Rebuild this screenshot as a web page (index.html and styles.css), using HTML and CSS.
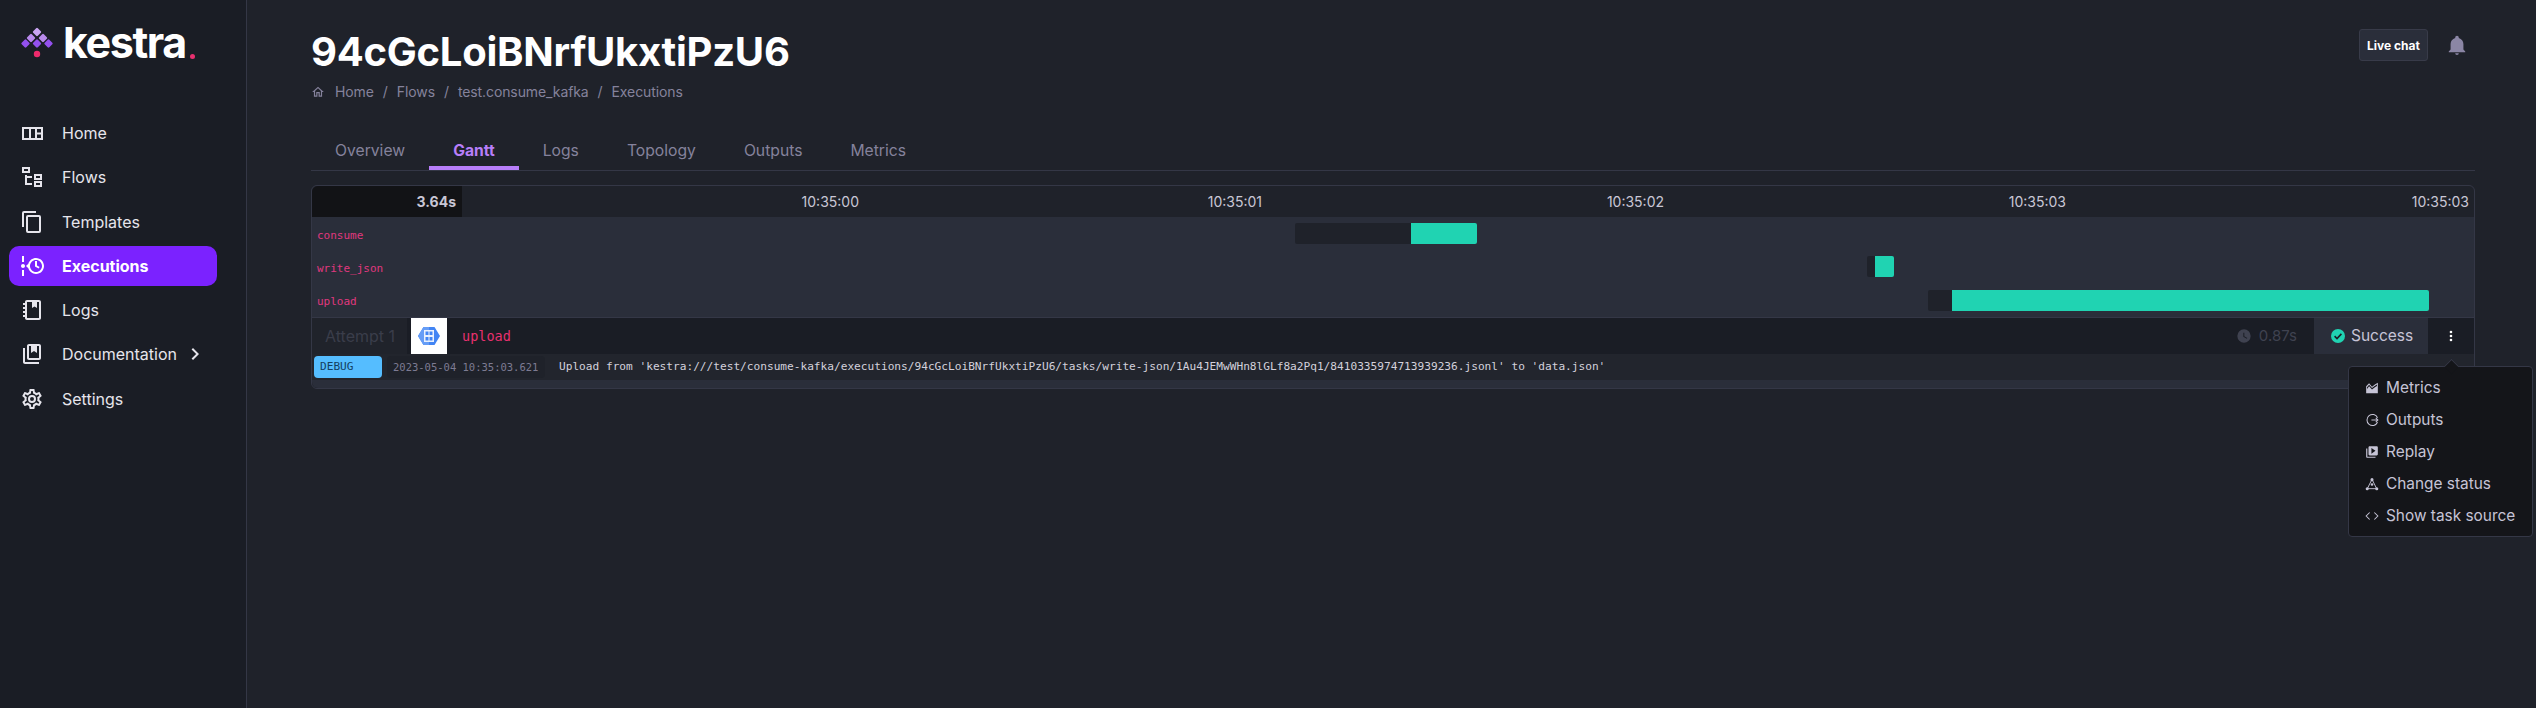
FILE: index.html
```html
<!DOCTYPE html>
<html lang="en">
<head>
    <meta charset="UTF-8">
    <meta name="viewport" content="width=device-width, initial-scale=1.0">
    <title>Kestra - Execution</title>
    <link rel="stylesheet" href="styles.css">
</head>
<body>
    <aside class="sidebar">
        <div class="logo">
            <svg class="logo-mark" width="36" height="40" viewBox="-4 0 36 40">
                <rect x="9.7" y="1.7" width="6.6" height="6.6" rx="1.2" transform="rotate(45 13 5)" fill="#c9a4f2"/>
                <rect x="3.7" y="7.7" width="6.6" height="6.6" rx="1.2" transform="rotate(45 7 11)" fill="#b889ec"/>
                <rect x="15.7" y="7.7" width="6.6" height="6.6" rx="1.2" transform="rotate(45 19 11)" fill="#b889ec"/>
                <rect x="-1.8" y="13.2" width="6.6" height="6.6" rx="1.2" transform="rotate(45 1.5 16.5)" fill="#9350ee"/>
                <rect x="9.7" y="13.2" width="6.6" height="6.6" rx="1.2" transform="rotate(45 13 16.5)" fill="#9350ee"/>
                <rect x="21.2" y="13.2" width="6.6" height="6.6" rx="1.2" transform="rotate(45 24.5 16.5)" fill="#9350ee"/>
                <circle cx="13" cy="27" r="3.2" fill="#ee2a6c"/>
            </svg>
            <span class="logo-text">kestra</span>
            <span class="logo-dot"></span>
        </div>
        <nav class="nav">
            <a class="nav-item">
                <svg class="nav-icon" viewBox="0 0 24 24"><path d="M3 7H22V18H3Z M10 7V18 M16 7V18 M16 12.5H22" fill="none" stroke="currentColor" stroke-width="2"/></svg>
                Home
            </a>
            <a class="nav-item">
                <svg class="nav-icon" viewBox="0 0 24 24"><path d="M12 13H7V18H12V20H5V10H7V11H12V13M8 4V6H4V4H8M10 2H2V8H10V2M20 11V13H16V11H20M22 9H14V15H22V9M20 18V20H16V18H20M22 16H14V22H22V16Z"/></svg>
                Flows
            </a>
            <a class="nav-item">
                <svg class="nav-icon" viewBox="0 0 24 24"><path d="M19,21H8V7H19M19,5H8A2,2 0 0,0 6,7V21A2,2 0 0,0 8,23H19A2,2 0 0,0 21,21V7A2,2 0 0,0 19,5M16,1H4A2,2 0 0,0 2,3V17H4V3H16V1Z"/></svg>
                Templates
            </a>
            <a class="nav-item active">
                <svg class="nav-icon" viewBox="0 0 24 24"><path d="M4 2V8H2V2H4M2 22V16H4V22H2M5 12C5 13.11 4.11 14 3 14C1.9 14 1 13.11 1 12C1 10.9 1.9 10 3 10C4.11 10 5 10.9 5 12M16 4C20.42 4 24 7.58 24 12C24 16.42 20.42 20 16 20C12.4 20 9.36 17.62 8.35 14.35L6 12L8.35 9.65C9.36 6.38 12.4 4 16 4M16 6C12.69 6 10 8.69 10 12C10 15.31 12.69 18 16 18C19.31 18 22 15.31 22 12C22 8.69 19.31 6 16 6M15 7V12.5L18.61 14.61L19.61 13L17 11.5V7H15Z"/></svg>
                Executions
            </a>
            <a class="nav-item">
                <svg class="nav-icon" viewBox="0 0 24 24"><path d="M7 2H19C20.1 2 21 2.9 21 4V20C21 21.1 20.1 22 19 22H7C5.9 22 5 21.1 5 20V19H3V17H5V15H3V13H5V11H3V9H5V7H3V5H5V4C5 2.9 5.9 2 7 2M7 4V20H19V4H17V10L14.5 8.5L12 10V4H7Z" fill-rule="evenodd"/></svg>
                Logs
            </a>
            <a class="nav-item">
                <svg class="nav-icon" viewBox="0 0 24 24"><path d="M19 2H9C7.9 2 7 2.9 7 4V16C7 17.1 7.9 18 9 18H19C20.1 18 21 17.1 21 16V4C21 2.9 20.1 2 19 2M19 16H9V4H11V11L14 9L17 11V4H19V16M5 6V20H19V22H5C3.9 22 3 21.1 3 20V6H5Z"/></svg>
                Documentation
                <svg class="nav-chevron" viewBox="0 0 24 24"><path d="M8.59,16.58L13.17,12L8.59,7.41L10,6L16,12L10,18L8.59,16.58Z"/></svg>
            </a>
            <a class="nav-item">
                <svg class="nav-icon" viewBox="0 0 24 24"><path d="M12,8A4,4 0 0,1 16,12A4,4 0 0,1 12,16A4,4 0 0,1 8,12A4,4 0 0,1 12,8M12,10A2,2 0 0,0 10,12A2,2 0 0,0 12,14A2,2 0 0,0 14,12A2,2 0 0,0 12,10M10,22C9.75,22 9.54,21.82 9.5,21.58L9.13,18.93C8.5,18.68 7.96,18.34 7.44,17.94L4.95,18.95C4.73,19.03 4.46,18.95 4.34,18.73L2.34,15.27C2.21,15.05 2.27,14.78 2.46,14.63L4.57,12.97L4.5,12L4.57,11L2.46,9.37C2.27,9.22 2.21,8.95 2.34,8.73L4.34,5.27C4.46,5.05 4.73,4.96 4.95,5.05L7.44,6.05C7.96,5.66 8.5,5.32 9.13,5.07L9.5,2.42C9.54,2.18 9.75,2 10,2H14C14.25,2 14.46,2.18 14.5,2.42L14.87,5.07C15.5,5.32 16.04,5.66 16.56,6.05L19.05,5.05C19.27,4.96 19.54,5.05 19.66,5.27L21.66,8.73C21.79,8.95 21.73,9.22 21.54,9.37L19.43,11L19.5,12L19.43,13L21.54,14.63C21.73,14.78 21.79,15.05 21.66,15.27L19.66,18.73C19.54,18.95 19.27,19.04 19.05,18.95L16.56,17.95C16.04,18.34 15.5,18.68 14.87,18.93L14.5,21.58C14.46,21.82 14.25,22 14,22H10M11.25,4L10.88,6.61C9.68,6.86 8.62,7.5 7.85,8.39L5.44,7.35L4.69,8.65L6.8,10.2C6.4,11.37 6.4,12.64 6.8,13.8L4.68,15.36L5.43,16.66L7.86,15.62C8.63,16.5 9.68,17.14 10.87,17.38L11.24,20H12.76L13.13,17.39C14.32,17.14 15.37,16.5 16.14,15.62L18.57,16.66L19.32,15.36L17.2,13.81C17.6,12.64 17.6,11.37 17.2,10.2L19.31,8.65L18.56,7.35L16.15,8.39C15.38,7.5 14.32,6.86 13.12,6.62L12.75,4H11.25Z"/></svg>
                Settings
            </a>
        </nav>
    </aside>

    <main class="content">
        <header class="topbar">
            <div>
                <h1>94cGcLoiBNrfUkxtiPzU6</h1>
                <div class="breadcrumb">
                    <svg class="crumb-home" viewBox="0 0 24 24"><path d="M12 5.69L17 10.19V18H15V12H9V18H7V10.19L12 5.69M12 3L2 12H5V20H11V14H13V20H19V12H22"/></svg>
                    <span>Home</span><i>/</i><span>Flows</span><i>/</i><span>test.consume_kafka</span><i>/</i><span>Executions</span>
                </div>
            </div>
            <div class="top-actions">
                <button class="chat-btn">Live chat</button>
                <svg class="bell" viewBox="0 0 24 24"><path d="M21,19V20H3V19L5,17V11C5,7.9 7.03,5.17 10,4.29C10,4.19 10,4.1 10,4A2,2 0 0,1 12,2A2,2 0 0,1 14,4C14,4.1 14,4.19 14,4.29C16.97,5.17 19,7.9 19,11V17L21,19M14,21A2,2 0 0,1 12,23A2,2 0 0,1 10,21"/></svg>
            </div>
        </header>

        <ul class="tabs">
            <li>Overview</li>
            <li class="active">Gantt</li>
            <li>Logs</li>
            <li>Topology</li>
            <li>Outputs</li>
            <li>Metrics</li>
        </ul>

        <section class="gantt">
            <div class="gantt-head">
                <div class="total">3.64s</div>
                <div class="tick">10:35:00</div>
                <div class="tick">10:35:01</div>
                <div class="tick">10:35:02</div>
                <div class="tick">10:35:03</div>
                <div class="tick">10:35:03</div>
            </div>
            <div class="gantt-rows">
                <div class="gantt-row">
                    <span class="task-name">consume</span>
                    <div class="track">
                        <div class="bar-wait" style="margin-left: 833px; width: 116px"></div>
                        <div class="bar-run" style="width: 66px"></div>
                    </div>
                </div>
                <div class="gantt-row">
                    <span class="task-name">write_json</span>
                    <div class="track">
                        <div class="bar-wait" style="margin-left: 1405px; width: 8px"></div>
                        <div class="bar-run" style="width: 19px"></div>
                    </div>
                </div>
                <div class="gantt-row">
                    <span class="task-name">upload</span>
                    <div class="track">
                        <div class="bar-wait" style="margin-left: 1466px; width: 24px"></div>
                        <div class="bar-run" style="width: 477px"></div>
                    </div>
                </div>
            </div>

            <div class="attempt">
                <div class="attempt-label">Attempt 1</div>
                <div class="task-icon">
                    <svg width="24" height="24" viewBox="0 0 24 24">
                        <path d="M6.5 3H17.5L23 12L17.5 21H6.5L1 12Z" fill="#4285f4"/>
                        <path d="M6.5 3H12V21H6.5L1 12Z" fill="#669df6"/>
                        <rect x="7" y="6" width="10" height="12" fill="#e8f0fe"/>
                        <rect x="8.5" y="7.5" width="3" height="3.5" fill="#4285f4"/>
                        <rect x="12.5" y="7.5" width="3" height="3.5" fill="#4285f4"/>
                        <rect x="8.5" y="13" width="3" height="3.5" fill="#4285f4"/>
                        <rect x="12.5" y="13" width="3" height="3.5" fill="#4285f4"/>
                    </svg>
                </div>
                <div class="attempt-task">upload</div>
                <div class="duration">
                    <svg width="16" height="16" viewBox="0 0 24 24"><path d="M12,2A10,10 0 0,0 2,12A10,10 0 0,0 12,22A10,10 0 0,0 22,12A10,10 0 0,0 12,2M16.2,16.2L11,13V7H12.5V12.2L17,14.9L16.2,16.2Z"/></svg>
                    0.87s
                </div>
                <div class="state">
                    <svg width="16" height="16" viewBox="0 0 16 16"><circle cx="8" cy="8" r="7" fill="#20d3b2"/><path d="M4.6 8.2L7 10.5L11.4 5.9" fill="none" stroke="#1b1e26" stroke-width="1.6"/></svg>
                    Success
                </div>
                <div class="kebab">
                    <svg width="16" height="16" viewBox="0 0 24 24"><path d="M12,16A2,2 0 0,1 14,18A2,2 0 0,1 12,20A2,2 0 0,1 10,18A2,2 0 0,1 12,16M12,10A2,2 0 0,1 14,12A2,2 0 0,1 12,14A2,2 0 0,1 10,12A2,2 0 0,1 12,10M12,4A2,2 0 0,1 14,6A2,2 0 0,1 12,8A2,2 0 0,1 10,6A2,2 0 0,1 12,4Z"/></svg>
                    <ul class="menu">
                        <li><svg viewBox="0 0 24 24"><path d="M2 21V9L7 4L12 10L17 6L22 3V21H2ZM3.5 13.5L7 9L12 14.5L17 10.5L20.5 8.5V6L16.5 8.5L12 12L7 6.5L3.5 10.5V13.5Z" fill-rule="evenodd"/></svg>Metrics</li>
                        <li><svg viewBox="0 0 24 24"><path d="M21.5 8A9.5 9.5 0 1 0 21.5 16M11 12H22M18.5 8.5L22 12L18.5 15.5" fill="none" stroke="currentColor" stroke-width="1.8"/></svg>Outputs</li>
                        <li><svg viewBox="0 0 24 24"><path d="M2 6H4V20H18V22H4C2.9 22 2 21.1 2 20V6M8 2H20C21.1 2 22 2.9 22 4V16C22 17.1 21.1 18 20 18H8C6.9 18 6 17.1 6 16V4C6 2.9 6.9 2 8 2M11 5V15L18 10L11 5Z" fill-rule="evenodd"/></svg>Replay</li>
                        <li><svg viewBox="0 0 24 24"><path d="M12 4L20 20H4Z" fill="none" stroke="currentColor" stroke-width="1.6"/><circle cx="12" cy="4.5" r="2.6"/><circle cx="3.8" cy="20" r="2.6"/><circle cx="20.2" cy="20" r="2.6"/><circle cx="12" cy="13" r="2.2"/></svg>Change status</li>
                        <li><svg viewBox="0 0 24 24"><path d="M8 6L2 12L8 18M16 6L22 12L16 18" fill="none" stroke="currentColor" stroke-width="1.8"/></svg>Show task source</li>
                    </ul>
                </div>
            </div>

            <div class="log-line">
                <span class="level">DEBUG</span>
                <span class="log-date">2023-05-04 10:35:03.621</span>
                <span class="log-msg">Upload from 'kestra:///test/consume-kafka/executions/94cGcLoiBNrfUkxtiPzU6/tasks/write-json/1Au4JEMwWHn8lGLf8a2Pq1/8410335974713939236.jsonl' to 'data.json'</span>
            </div>
            <div class="log-foot"></div>
        </section>
    </main>
</body>
</html>
```

FILE: styles.css
```css
:root {
    --bg: #1f222a;
    --bg-dark: #1a1d25;
    --bg-light: #2a2e3a;
    --border: #343746;
    --purple: #7b22ff;
    --tab-purple: #b77ef9;
    --pink: #e8306f;
    --green: #20d3b2;
    --muted: #85829c;
    --text: #e6e5ec;
    --menu-text: #c6c4d6;
}

* {
    box-sizing: border-box;
}

html, body {
    height: 100%;
}

body {
    margin: 0;
    display: flex;
    overflow: hidden;
    background-color: var(--bg);
    color: var(--text);
    font-family: Inter, "Liberation Sans", sans-serif;
}

.sidebar {
    width: 247px;
    flex-shrink: 0;
    background-color: var(--bg-dark);
    border-right: 1px solid var(--border);
}

.logo {
    display: flex;
    align-items: flex-start;
    height: 113px;
    padding: 20px 0 0 20px;
}

.logo-mark {
    margin-top: 7px;
}

.logo-text {
    margin-left: 7px;
    font-size: 43px;
    line-height: 44px;
    font-weight: 700;
    letter-spacing: -1.4px;
    color: #fff;
}

.logo-dot {
    width: 5px;
    height: 5px;
    margin: 34px 0 0 4px;
    border-radius: 50%;
    background-color: var(--pink);
}

.nav {
    display: flex;
    flex-direction: column;
    gap: 4.3px;
    padding: 0 29px 0 9px;
}

.nav-item {
    display: flex;
    align-items: center;
    gap: 18px;
    height: 40px;
    padding-left: 11px;
    border-radius: 10px;
    font-size: 16px;
    color: var(--text);
}

.nav-item.active {
    background-color: var(--purple);
    color: #fff;
    font-weight: 700;
}

.nav-icon {
    width: 24px;
    height: 24px;
    fill: currentColor;
    flex-shrink: 0;
}

.nav-chevron {
    width: 24px;
    height: 24px;
    fill: currentColor;
    margin-left: -12px;
}

.content {
    flex: 1;
    min-width: 0;
    padding: 0 61px 0 64px;
}

.topbar {
    display: flex;
    justify-content: space-between;
    height: 125px;
}

h1 {
    margin: 29px 0 0;
    font-size: 40px;
    line-height: 46px;
    font-weight: 700;
    letter-spacing: -0.25px;
    color: #fff;
}

.breadcrumb {
    display: flex;
    align-items: center;
    margin-top: 8px;
    font-size: 14px;
    line-height: 18px;
    letter-spacing: -0.1px;
    color: var(--muted);
}

.breadcrumb i {
    font-style: normal;
    margin: 0 9px;
}

.crumb-home {
    width: 14px;
    height: 14px;
    fill: currentColor;
    margin-right: 10px;
}

.top-actions {
    display: flex;
    align-items: center;
    gap: 18px;
    height: 32px;
    margin: 29px 7px 0 0;
}

.chat-btn {
    height: 32px;
    width: 69px;
    padding: 0;
    border: 1px solid #383b49;
    border-radius: 3px;
    background-color: var(--bg-light);
    color: #fff;
    font-family: inherit;
    font-size: 12px;
    font-weight: 700;
}

.bell {
    width: 22px;
    height: 22px;
    fill: #8b86a5;
}

.tabs {
    display: flex;
    list-style: none;
    margin: 0;
    padding: 0;
    height: 46px;
    border-bottom: 1px solid var(--border);
}

.tabs li {
    height: 45px;
    padding: 0 24px;
    line-height: 52px;
    font-size: 15.7px;
    color: var(--muted);
}

.tabs li.active {
    color: var(--tab-purple);
    font-weight: 700;
    border-bottom: 4px solid var(--tab-purple);
}

.gantt {
    margin-top: 14px;
    border: 1px solid var(--border);
    border-radius: 6px;
}

.gantt-head {
    display: grid;
    grid-template-columns: 150px 397px 403px 402px 402px 403px;
    height: 31px;
    font-size: 14px;
    line-height: 31px;
    color: #c9c7d6;
}

.total {
    padding-right: 6px;
    text-align: right;
    background-color: #121316;
    border-top-left-radius: 6px;
    font-weight: 700;
}

.tick {
    text-align: right;
}

.gantt-rows {
    display: flex;
    flex-direction: column;
    background-color: var(--bg-light);
    border-bottom: 1px solid var(--border);
}

.gantt-row {
    display: flex;
    align-items: center;
    height: 33.3px;
}

.task-name {
    width: 150px;
    flex-shrink: 0;
    padding: 3px 0 0 5px;
    font-family: "DejaVu Sans Mono", monospace;
    font-size: 11px;
    color: #e0387f;
}

.track {
    display: flex;
    flex: 1;
    height: 21px;
}

.bar-wait {
    background-color: #1f222a;
    border-radius: 2px 0 0 2px;
}

.bar-run {
    background-color: var(--green);
    border-radius: 0 2px 2px 0;
}

.attempt {
    display: flex;
    align-items: stretch;
    height: 36px;
    background-color: var(--bg-dark);
}

.attempt-label {
    width: 95px;
    padding-left: 13px;
    background-color: #20232b;
    font-size: 16px;
    line-height: 36px;
    color: #3a3d4a;
}

.task-icon {
    display: flex;
    align-items: center;
    justify-content: center;
    width: 36px;
    margin-left: 4px;
    background-color: #fff;
}

.attempt-task {
    flex: 1;
    padding-left: 15px;
    font-family: "DejaVu Sans Mono", monospace;
    font-size: 13.5px;
    line-height: 36px;
    color: var(--pink);
}

.duration {
    display: flex;
    align-items: center;
    gap: 7px;
    padding-right: 17px;
    font-size: 15px;
    color: #3f4250;
}

.duration svg {
    fill: currentColor;
}

.state {
    display: flex;
    align-items: center;
    gap: 5px;
    width: 114px;
    padding-left: 16px;
    background-color: var(--bg-light);
    font-size: 15.5px;
    color: #c6c4d6;
}

.kebab {
    position: relative;
    display: flex;
    align-items: center;
    justify-content: center;
    width: 46px;
    color: #fff;
}

.kebab svg {
    fill: currentColor;
}

.menu {
    position: absolute;
    top: 48px;
    left: -80px;
    width: 185px;
    height: 171px;
    margin: 0;
    padding: 5px 0;
    list-style: none;
    background-color: #141519;
    border: 1px solid var(--border);
    border-radius: 4px;
}

.menu::before {
    content: "";
    position: absolute;
    top: -6px;
    left: 97px;
    width: 10px;
    height: 10px;
    background-color: #141519;
    border-top: 1px solid var(--border);
    border-left: 1px solid var(--border);
    transform: rotate(45deg);
}

.menu li {
    display: flex;
    align-items: center;
    gap: 7px;
    height: 32px;
    padding-left: 16px;
    font-size: 15.4px;
    color: var(--menu-text);
}

.menu svg {
    width: 14px;
    height: 14px;
    fill: currentColor;
}

.log-line {
    display: flex;
    align-items: center;
    height: 26px;
    padding-left: 2px;
    background-color: #22252d;
    font-family: "DejaVu Sans Mono", monospace;
    font-size: 11.15px;
}

.level {
    width: 68px;
    height: 22px;
    padding-left: 6px;
    border-radius: 4px;
    background-color: #55bdff;
    color: #14405f;
    line-height: 22px;
}

.log-date {
    width: 158px;
    height: 22px;
    margin-left: 5px;
    padding-left: 6px;
    border-radius: 4px;
    background-color: #1f222a;
    color: #7d7b92;
    line-height: 22px;
    font-size: 10.5px;
}

.log-msg {
    margin-left: 14px;
    color: #d3d1dc;
    white-space: nowrap;
}

.log-foot {
    height: 8px;
    background-color: var(--bg-light);
    border-radius: 0 0 6px 6px;
}
```
